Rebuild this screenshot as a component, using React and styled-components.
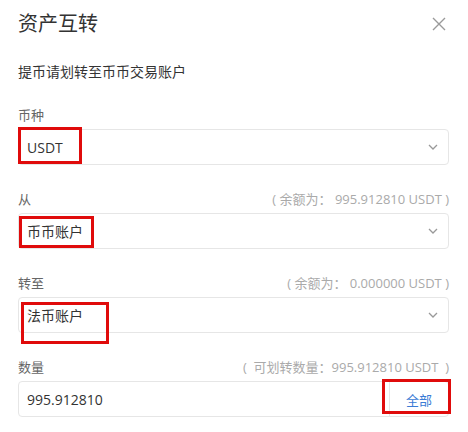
import React from 'react';
import styled, { createGlobalStyle } from 'styled-components';

const GlobalStyle = createGlobalStyle`
  body {
    margin: 0;
    background: #fff;
    font-family: "Open Sans", "Noto Sans CJK SC", sans-serif;
  }
`;

const Dialog = styled.div`
  width: 468px;
  height: 432px;
  box-sizing: border-box;
  padding: 10px 19px 0 18px;
  overflow: hidden;
  background: #fff;
`;

const Header = styled.div`
  display: flex;
  align-items: center;
  justify-content: space-between;
  height: 28px;
`;

const Title = styled.h2`
  margin: 0;
  font-size: 20px;
  font-weight: 400;
  line-height: 28px;
  color: #333;
`;

const Close = styled.button`
  display: flex;
  align-items: center;
  justify-content: center;
  width: 16px;
  height: 16px;
  margin-right: 2px;
  padding: 0;
  border: none;
  background: transparent;
  cursor: pointer;
`;

const Hint = styled.p`
  margin: 24px 0 0;
  font-size: 14px;
  line-height: 20px;
  color: #333;
`;

const Field = styled.div`
  margin-top: ${(p) => (p.$first ? '22px' : '23px')};
`;

const LabelRow = styled.div`
  display: flex;
  align-items: center;
  justify-content: space-between;
  height: 20px;
  margin-bottom: 5px;
`;

const Label = styled.span`
  font-size: 13px;
  color: #666;
`;

const Balance = styled.span`
  font-size: 13px;
  color: #aaa;
  white-space: pre;
`;

const Control = styled.div`
  position: relative;
  display: flex;
  align-items: center;
  height: 36px;
  box-sizing: border-box;
  border: 1px solid #e6e6e6;
  border-radius: 4px;
  padding-left: 8px;
  font-size: 14px;
  color: #333;
`;

const Value = styled.span`
  flex: 1;
`;

const Chevron = styled.span`
  display: flex;
  margin-right: 10px;
`;

const Addon = styled.span`
  display: flex;
  align-items: center;
  justify-content: center;
  width: 58px;
  align-self: stretch;
  border-left: 1px solid #e6e6e6;
  font-size: 13px;
  color: #3a7bd5;
  cursor: pointer;
`;

const Mark = styled.span`
  position: absolute;
  box-sizing: border-box;
  border: 3px solid #e00b0b;
  pointer-events: none;
`;

const ArrowDown = () => (
  <svg width="10" height="6" viewBox="0 0 10 6">
    <path d="M1 1l4 4 4-4" fill="none" stroke="#999" strokeWidth="1.3" />
  </svg>
);

const fields = [
  { label: '币种', value: 'USDT', mark: { left: -1, top: -3, width: 64, height: 37 } },
  {
    label: '从',
    balance: '( 余额为： 995.912810 USDT )',
    value: '币币账户',
    mark: { left: 0, top: 2, width: 75, height: 32 },
  },
  {
    label: '转至',
    balance: '( 余额为： 0.000000 USDT )',
    value: '法币账户',
    mark: { left: 2, top: 4, width: 88, height: 42 },
  },
];

export default function App() {
  return (
    <>
      <GlobalStyle />
      <Dialog>
        <Header>
          <Title>资产互转</Title>
          <Close aria-label="关闭">
            <svg width="14" height="14" viewBox="0 0 14 14">
              <path d="M1 1l12 12M13 1L1 13" stroke="#9a9a9a" strokeWidth="1.4" />
            </svg>
          </Close>
        </Header>
        <Hint>提币请划转至币币交易账户</Hint>

        {fields.map((f, i) => (
          <Field key={f.label} $first={i === 0}>
            <LabelRow>
              <Label>{f.label}</Label>
              {f.balance && <Balance>{f.balance}</Balance>}
            </LabelRow>
            <Control>
              <Value>{f.value}</Value>
              <Chevron>
                <ArrowDown />
              </Chevron>
              <Mark style={f.mark} />
            </Control>
          </Field>
        ))}

        <Field>
          <LabelRow>
            <Label>数量</Label>
            <Balance>(  可划转数量：995.912810 USDT  )</Balance>
          </LabelRow>
          <Control>
            <Value>995.912810</Value>
            <Addon>全部</Addon>
            <Mark style={{ left: 363, top: -3, width: 69, height: 35 }} />
          </Control>
        </Field>
      </Dialog>
    </>
  );
}
